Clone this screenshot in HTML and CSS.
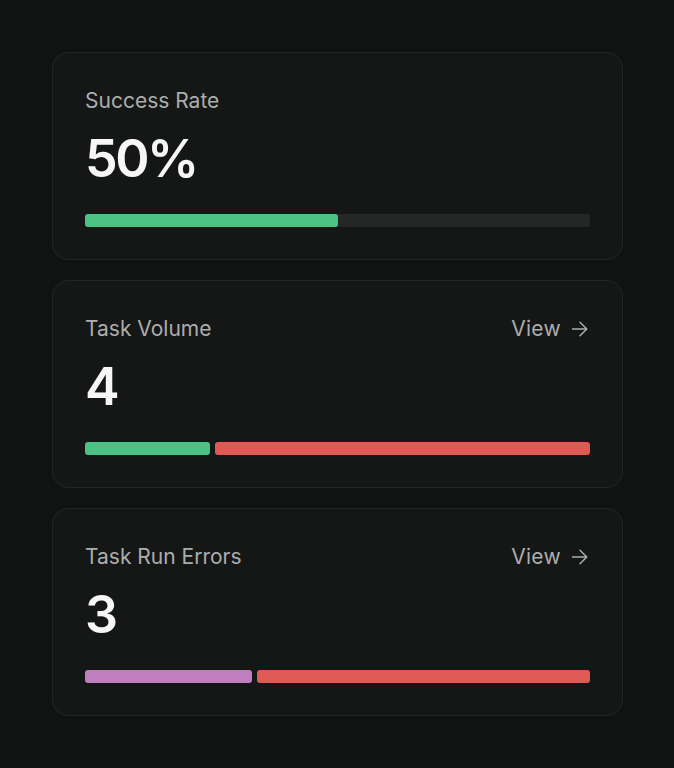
FILE: index.html
```html
<!DOCTYPE html>
<html lang="en">
<head>
<meta charset="utf-8">
<title>Stats</title>
<link rel="stylesheet" href="styles.css">
</head>
<body>
<main class="stack">
  <section class="card">
    <div class="card-head">
      <span class="label">Success Rate</span>
    </div>
    <div class="value">50%</div>
    <div class="track">
      <div class="fill green" style="width:50%"></div>
    </div>
  </section>

  <section class="card">
    <div class="card-head">
      <span class="label">Task Volume</span>
      <a class="view" href="#">View
        <svg class="arrow" width="19" height="20" viewBox="0 0 19 20" fill="none" stroke="currentColor" stroke-width="1.5" stroke-linecap="round" stroke-linejoin="round"><path d="M1.5 10h14M9 3.2l6.8 6.8L9 16.8"/></svg>
      </a>
    </div>
    <div class="value">4</div>
    <div class="segments">
      <div class="seg green" style="flex:1"></div>
      <div class="seg red" style="flex:3"></div>
    </div>
  </section>

  <section class="card">
    <div class="card-head">
      <span class="label">Task Run Errors</span>
      <a class="view" href="#">View
        <svg class="arrow" width="19" height="20" viewBox="0 0 19 20" fill="none" stroke="currentColor" stroke-width="1.5" stroke-linecap="round" stroke-linejoin="round"><path d="M1.5 10h14M9 3.2l6.8 6.8L9 16.8"/></svg>
      </a>
    </div>
    <div class="value">3</div>
    <div class="segments">
      <div class="seg purple" style="flex:1"></div>
      <div class="seg red" style="flex:2"></div>
    </div>
  </section>
</main>
</body>
</html>
```
FILE: styles.css
```css
html, body {
  margin: 0;
  padding: 0;
  background: #111212;
}
body {
  font-family: Inter, "Noto Sans", "Liberation Sans", sans-serif;
  color: #f4f4f4;
  padding: 52px 51px 52px 52px;
}
.stack {
  display: flex;
  flex-direction: column;
  gap: 20px;
}
.card {
  background: #151616;
  border: 1px solid #242525;
  border-radius: 16px;
  padding: 34px 32px 32px 32px;
  display: flex;
  flex-direction: column;
}
.card-head {
  display: flex;
  justify-content: space-between;
  align-items: center;
  height: 28px;
}
.label {
  font-size: 21px;
  line-height: 28px;
  color: #acadad;
}
.view {
  display: flex;
  align-items: center;
  gap: 10px;
  font-size: 21px;
  line-height: 28px;
  letter-spacing: 0.3px;
  color: #acadad;
  text-decoration: none;
}
.arrow {
  display: block;
}
.value {
  margin-top: 14px;
  font-size: 52px;
  line-height: 60px;
  font-weight: 600;
  letter-spacing: -2.5px;
  color: #f6f6f6;
}
.track {
  margin-top: 25px;
  height: 13px;
  background: #252626;
  border-radius: 3px;
  display: flex;
}
.fill {
  height: 100%;
  border-radius: 3px;
}
.segments {
  margin-top: 25px;
  height: 13px;
  display: flex;
  gap: 5px;
}
.seg {
  height: 100%;
  border-radius: 3px;
}
.green { background: #4cc285; }
.red { background: #e05a55; }
.purple { background: #bf7fbf; }
```
